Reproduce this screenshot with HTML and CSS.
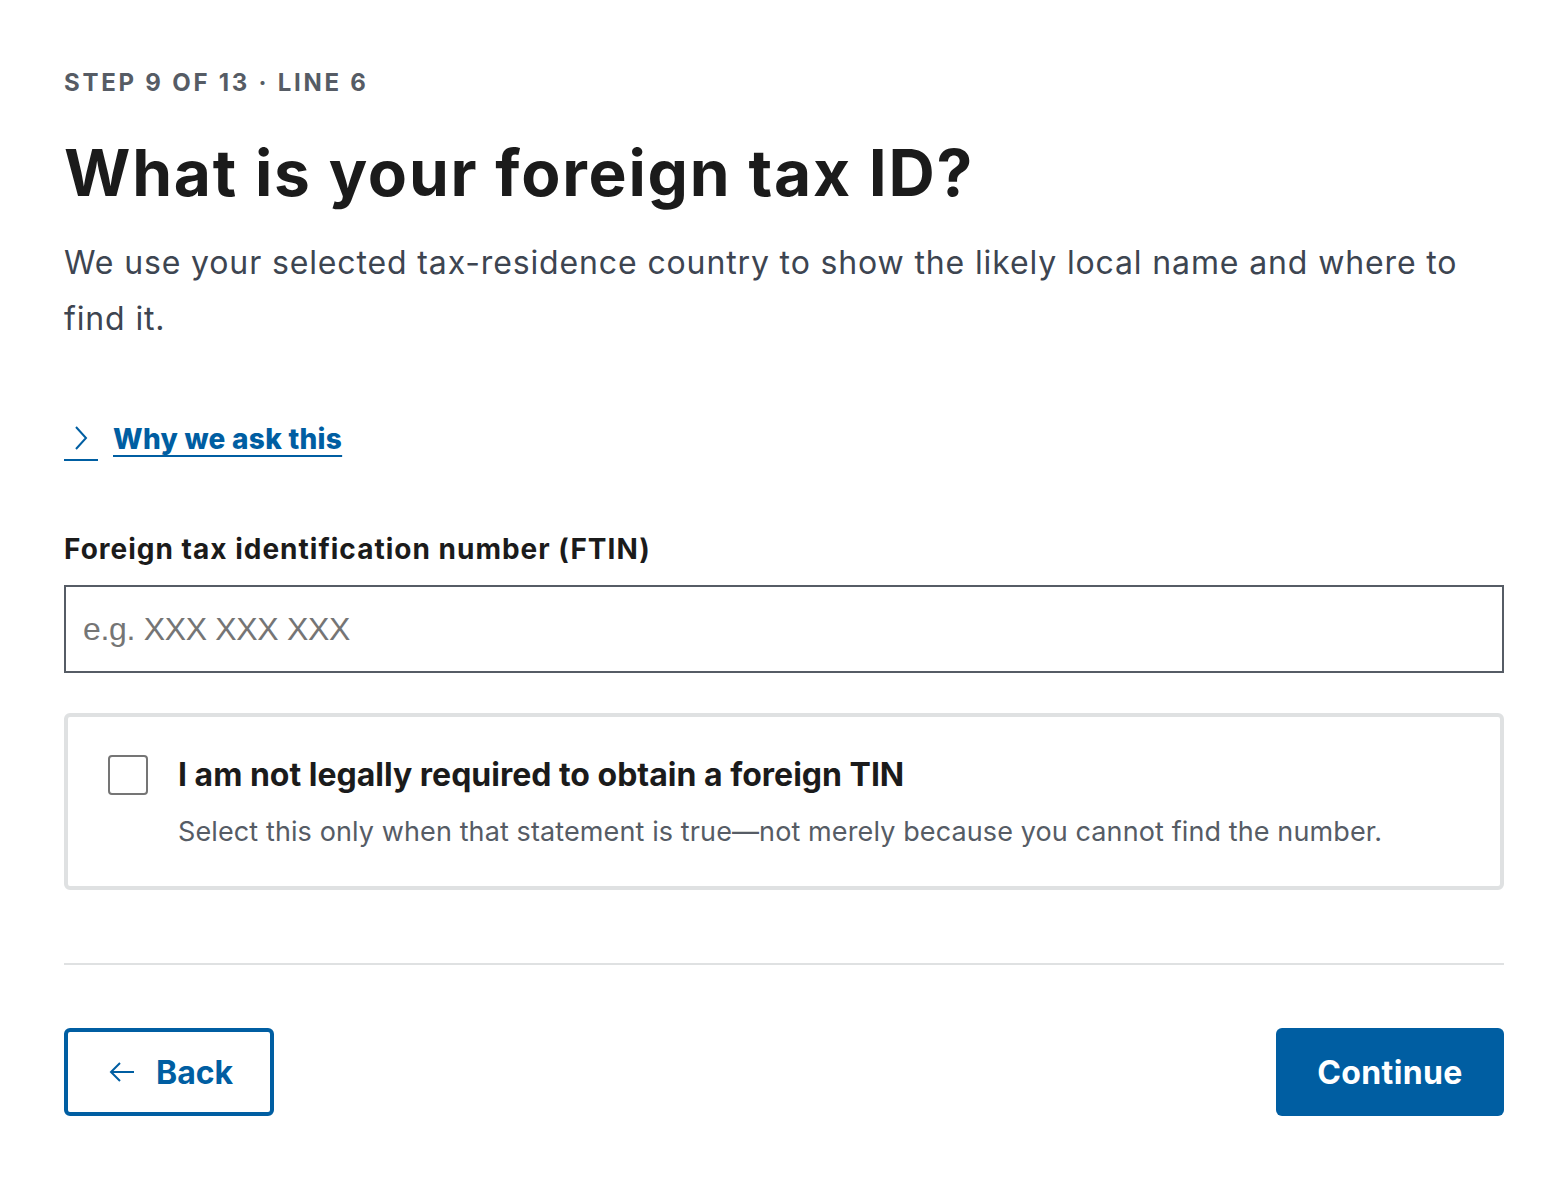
FILE: index.html
```html
<!DOCTYPE html>
<html lang="en">
<head>
<meta charset="utf-8">
<title>Foreign tax ID</title>
<link rel="stylesheet" href="styles.css">
</head>
<body>
<main class="page">
  <p class="eyebrow">Step 9 of 13 · Line 6</p>
  <h1 class="title">What is your foreign tax ID?</h1>
  <p class="lead">We use your selected tax-residence country to show the likely local name and where to find it.</p>

  <button class="disclosure" type="button">
    <span class="disclosure-icon">
      <svg width="20" height="28" viewBox="0 0 20 28" aria-hidden="true"><path d="M5 3 L15 14 L5 25" fill="none" stroke="#005ea2" stroke-width="2"/></svg>
    </span>
    <span class="disclosure-text">Why we ask this</span>
  </button>

  <label class="field-label" for="ftin">Foreign tax identification number (FTIN)</label>
  <input class="field-input" id="ftin" type="text" placeholder="e.g. XXX XXX XXX">

  <label class="check-card">
    <span class="check-box"></span>
    <span class="check-body">
      <span class="check-title">I am not legally required to obtain a foreign TIN</span>
      <span class="check-hint">Select this only when that statement is true—not merely because you cannot find the number.</span>
    </span>
  </label>

  <hr class="divider">

  <div class="actions">
    <button class="btn btn-outline" type="button">
      <svg width="28" height="24" viewBox="0 0 28 24" aria-hidden="true"><path d="M26 12 H3 M12 3 L3 12 L12 21" fill="none" stroke="#005ea2" stroke-width="2"/></svg>
      <span>Back</span>
    </button>
    <button class="btn btn-primary" type="button">Continue</button>
  </div>
</main>
</body>
</html>
```

FILE: styles.css
```css
* { box-sizing: border-box; }

html, body {
  margin: 0;
  background: #ffffff;
}

body {
  font-family: Inter, "Noto Sans", sans-serif;
  color: #1b1b1b;
}

.page {
  padding: 64px 64px;
  display: flex;
  flex-direction: column;
}

.eyebrow {
  margin: 0;
  font-size: 24px;
  line-height: 38px;
  font-weight: 700;
  letter-spacing: 0.115em;
  text-transform: uppercase;
  color: #565c65;
}

.title {
  margin: 32px 0 0;
  font-size: 64px;
  line-height: 77px;
  font-weight: 700;
  letter-spacing: 0.028em;
  color: #1b1b1b;
}

.lead {
  margin: 24px 0 0;
  font-size: 32px;
  line-height: 56px;
  font-weight: 400;
  letter-spacing: 0.027em;
  color: #3d4551;
}

.disclosure {
  align-self: flex-start;
  margin-top: 72px;
  padding: 0;
  border: 0;
  background: none;
  display: flex;
  align-items: flex-start;
  gap: 15px;
  font-family: inherit;
  cursor: pointer;
  height: 40px;
}

.disclosure-icon {
  display: flex;
  justify-content: center;
  width: 34px;
  height: 42px;
  padding-top: 5px;
  border-bottom: 2px solid #005ea2;
}

.disclosure-text {
  font-size: 28px;
  line-height: 40px;
  font-weight: 800;
  letter-spacing: 0.01em;
  color: #005ea2;
  text-decoration: underline;
  text-decoration-thickness: 2px;
  text-underline-offset: 6px;
}

.field-label {
  margin-top: 70px;
  font-size: 28px;
  line-height: 40px;
  font-weight: 700;
  letter-spacing: 0.036em;
  color: #1b1b1b;
}

.field-input {
  margin-top: 16px;
  width: 100%;
  height: 88px;
  border: 2px solid #565c65;
  border-radius: 0;
  padding: 0 17px;
  font-family: "Liberation Sans", Arial, sans-serif;
  font-size: 32px;
  letter-spacing: -0.01em;
  color: #1b1b1b;
  background: #ffffff;
}

.field-input::placeholder {
  color: #757575;
}

.check-card {
  margin-top: 40px;
  border: 4px solid #dfe1e2;
  border-radius: 6px;
  padding: 38px 40px 34px;
  display: flex;
  gap: 30px;
  cursor: pointer;
}

.check-box {
  flex: none;
  width: 40px;
  height: 40px;
  border: 2px solid #757575;
  border-radius: 4px;
  background: #ffffff;
}

.check-body {
  display: flex;
  flex-direction: column;
}

.check-title {
  font-size: 32px;
  line-height: 40px;
  font-weight: 700;
  color: #1b1b1b;
}

.check-hint {
  margin-top: 17px;
  font-size: 27px;
  line-height: 40px;
  letter-spacing: 0.004em;
  color: #565c65;
}

.divider {
  margin: 73px 0 0;
  border: 0;
  height: 2px;
  background: #dfe1e2;
}

.actions {
  margin-top: 63px;
  display: flex;
  justify-content: space-between;
}

.btn {
  height: 88px;
  border-radius: 6px;
  font-family: inherit;
  font-size: 32px;
  font-weight: 700;
  display: flex;
  align-items: center;
  cursor: pointer;
}

.btn-outline {
  width: 210px;
  border: 4px solid #005ea2;
  background: #ffffff;
  color: #005ea2;
  padding: 0 36px 0 40px;
  gap: 20px;
}

.btn-primary {
  width: 228px;
  border: 0;
  background: #005ea2;
  color: #ffffff;
  letter-spacing: 0.012em;
  justify-content: center;
}
```
